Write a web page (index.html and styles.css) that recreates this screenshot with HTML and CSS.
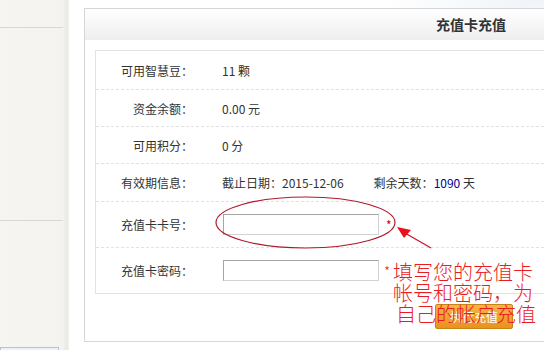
FILE: index.html
```html
<!DOCTYPE html>
<html lang="zh-CN">
<head>
    <meta charset="UTF-8">
    <title>充值卡充值</title>
    <link rel="stylesheet" href="styles.css">
</head>
<body>
    <div class="page">
        <aside class="side">
            <div class="side-top"></div>
            <div class="side-mid"></div>
            <div class="side-box"></div>
        </aside>

        <main class="main">
            <div class="panel">
                <div class="panel-head">
                    <h2>充值卡充值</h2>
                </div>
                <div class="panel-body">
                    <div class="info">
                        <div class="row r-first">
                            <span class="label">可用智慧豆：</span>
                            <span class="val">11 颗</span>
                        </div>
                        <div class="row">
                            <span class="label">资金余额：</span>
                            <span class="val">0.00 元</span>
                        </div>
                        <div class="row">
                            <span class="label">可用积分：</span>
                            <span class="val">0 分</span>
                        </div>
                        <div class="row r-date">
                            <span class="label">有效期信息：</span>
                            <span class="val">截止日期：2015-12-06<span class="days">剩余天数：<span class="num">1090</span> 天</span></span>
                        </div>
                        <div class="row r-input">
                            <span class="label">充值卡卡号：</span>
                            <span class="val"><input type="text" class="field"><span class="req">*</span></span>
                        </div>
                        <div class="row r-input r-last">
                            <span class="label">充值卡密码：</span>
                            <span class="val"><input type="password" class="field"></span>
                        </div>
                    </div>
                    <div class="actions">
                        <button class="btn">执行充值</button>
                    </div>
                </div>
            </div>
        </main>

        <!-- 截图上的红色标注 -->
        <svg class="marks" width="544" height="350" viewBox="0 0 544 350">
            <ellipse cx="305.5" cy="222.5" rx="89.5" ry="25.5" fill="none" stroke="#b0182a" stroke-width="1.2"/>
            <line x1="405" y1="233" x2="431" y2="248" stroke="#c8102a" stroke-width="1.2"/>
            <polygon points="397,227 411,230 404,238" fill="#e8101c"/>
        </svg>
        <div class="note">
            <div><span class="star">*</span>填写您的充值卡</div>
            <div class="l2">帐号和密码，为</div>
            <div class="l3">自己的帐户充值</div>
        </div>
    </div>
</body>
</html>
```

FILE: styles.css
```css
html, body {
    margin: 0;
    padding: 0;
    overflow: hidden;
}

body {
    font-family: "Noto Sans CJK SC", "DejaVu Sans", sans-serif;
    font-size: 12px;
    color: #333;
    background: #fff;
}

.page {
    position: relative;
    width: 544px;
    height: 350px;
    display: flex;
    overflow: hidden;
    background: radial-gradient(ellipse 160px 40px at 540px 0, #eef4f9, rgba(255,255,255,0));
}

/* 左侧栏 */
.side {
    flex: 0 0 69px;
    height: 350px;
    background: linear-gradient(to right, #f6f5f2 0, #f4f3f0 63px, #eae9e5 66px, #f1f0ed 69px);
}

.side-top {
    width: 63px;
    height: 27px;
    border-bottom: 1px solid #d8d7d3;
}

.side-mid {
    width: 63px;
    height: 192px;
    border-bottom: 1px solid #d8d7d3;
}

.side-box {
    width: 57px;
    height: 10px;
    margin-top: 126px;
    border: 1px solid #a9c6e6;
    background: #eaf1fa;
}

/* 主面板 */
.main {
    flex: 1;
    padding: 8px 0 0 15px;
}

.panel {
    width: 560px;
    border: 1px solid #d6d6d6;
    background: #fff;
}

.panel-head {
    height: 31px;
    background: linear-gradient(#ffffff, #eeeeee);
}

.panel-head h2 {
    margin: 0;
    padding-left: 351px;
    font-size: 14px;
    line-height: 31px;
    font-weight: bold;
    color: #333;
}

.panel-body {
    padding: 10px 10px 0 10px;
}

.info {
    border: 1px solid #e3e3e3;
}

.row {
    display: grid;
    grid-template-columns: 97px 1fr;
    column-gap: 29px;
    align-items: center;
    height: 36px;
    border-bottom: 1px dashed #e2e2e2;
}

.r-first {
    height: 38px;
}

.r-date {
    height: 37px;
}

.r-input {
    height: 45px;
}

.r-last {
    border-bottom: none;
}

.label {
    text-align: right;
}

.val {
    display: flex;
    align-items: center;
    white-space: nowrap;
}

.days {
    margin-left: 30px;
}

.num {
    color: #000099;
}

.field {
    width: 156px;
    height: 21px;
    box-sizing: border-box;
    margin: 0 0 0 1px;
    padding: 0 3px;
    border: 1px solid;
    border-color: #a5a5a5 #d2d2d2 #d2d2d2 #a5a5a5;
    background: #fff;
}

.req {
    color: #cc0000;
    margin-left: 7px;
}

.actions {
    padding: 10px 0 12px 340px;
}

.btn {
    display: block;
    width: 78px;
    height: 25px;
    padding: 0;
    border: 1px solid #c98418;
    border-radius: 2px;
    background: linear-gradient(#f7b545, #e8921c);
    color: #fff;
    font-family: inherit;
    font-size: 12px;
}

/* 红色标注 */
.marks {
    position: absolute;
    left: 0;
    top: 0;
    pointer-events: none;
}

.note {
    position: absolute;
    left: 384px;
    top: 261px;
    font-size: 20px;
    font-weight: 300;
    line-height: 21px;
    color: #ea1c22;
    white-space: nowrap;
}

.star {
    display: inline-block;
    width: 9px;
    font-size: 14px;
    vertical-align: top;
}

.l2 {
    padding-left: 9px;
}

.l3 {
    padding-left: 12px;
}
```
